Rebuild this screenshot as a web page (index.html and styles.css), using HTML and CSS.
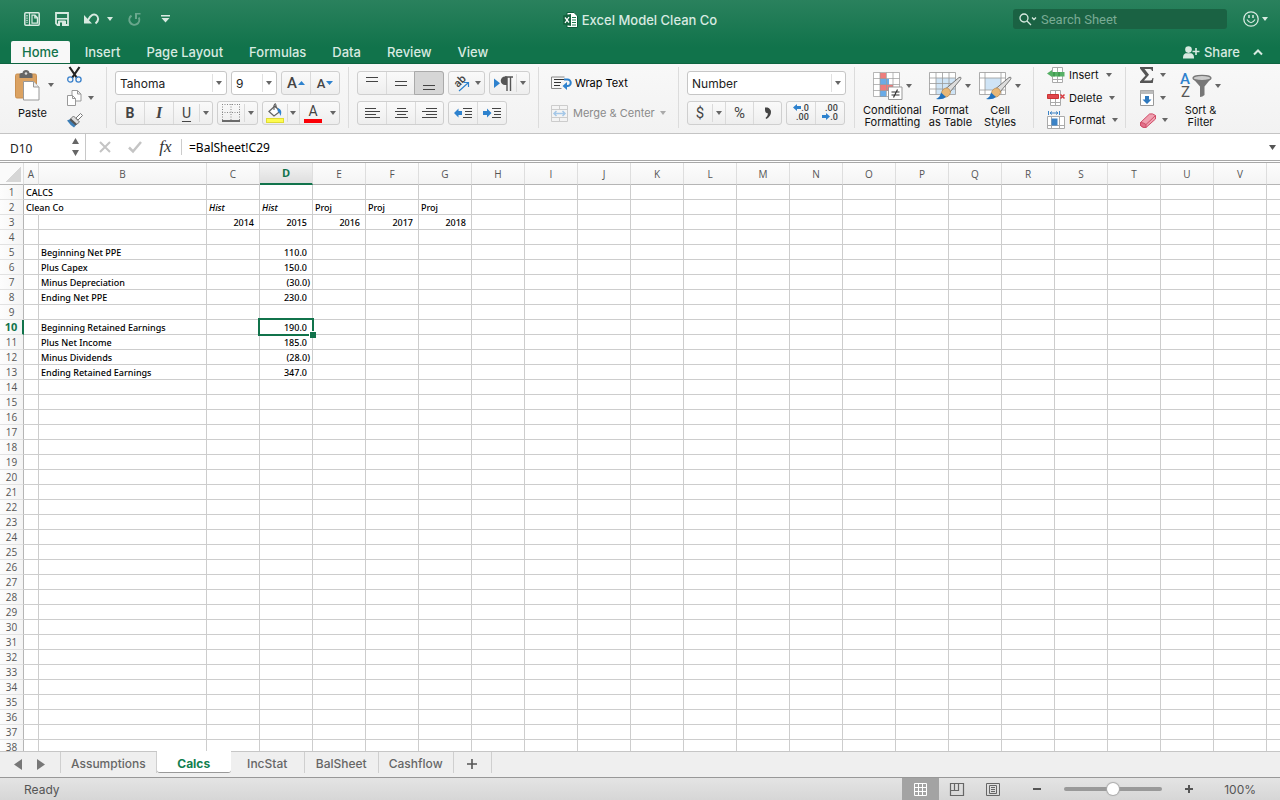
FILE: index.html
```html
<!DOCTYPE html>
<html lang="en">
<head>
    <meta charset="UTF-8">
    <meta name="viewport" content="width=device-width, initial-scale=1.0">
    <title>Excel Model Clean Co</title>
    <link rel="stylesheet" href="styles.css">
</head>
<body>

    <header class="top">
        <div class="titlebar">
            <div class="quick">
                <button aria-label="New from template"><svg width="16" height="14" viewBox="0 0 16 14"><rect x=".8" y=".8" width="14.4" height="12.4" rx="1" fill="none" stroke="currentColor" stroke-width="1.5"/><path d="M5.5 1v12" stroke="currentColor" stroke-width="1.2"/><path d="M3 3v8" stroke="currentColor" stroke-width="1.4" stroke-dasharray="1.4 1"/><path d="M8 3.2h3l2.4 2.4v5.6H8zM10.8 3.2v2.6h2.6" fill="none" stroke="currentColor" stroke-width="1.2"/></svg></button>
                <button aria-label="Save"><svg width="14" height="14" viewBox="0 0 14 14"><path d="M1 1h12v12H2.5L1 11.500z" fill="none" stroke="currentColor" stroke-width="1.8"/><path d="M1 6.800h12" stroke="currentColor" stroke-width="1.6"/><path d="M3.500 13V9h7v4z" stroke="currentColor" fill="currentColor"/><path d="M5 10.500h2V14H5z" fill="#1f7a54"/></svg></button>
                <button class="undo" aria-label="Undo"><svg width="16" height="12" viewBox="0 0 16 12"><path d="M0 2v8.500h8z" fill="currentColor"/><path d="M4 7C7 1 10 .8 12 2c3 2 3 5.500-.5 8.500" fill="none" stroke="currentColor" stroke-width="2"/></svg><i class="caret"></i></button>
                <button class="faded" aria-label="Redo"><svg width="13" height="13" viewBox="0 0 13 13"><path d="M3.500 2.600A5 5 0 1 0 10.800 4.500" fill="none" stroke="currentColor" stroke-width="2"/><path d="M7 0h5.500v1.500H9V6H7z" fill="currentColor"/></svg></button>
                <button class="more" aria-label="Customize toolbar"><svg width="9" height="8" viewBox="0 0 9 8"><path d="M0 0h9v1.500H0zM.5 3h8L4.500 7.500z" fill="currentColor"/></svg></button>
            </div>
            <h1 class="doc-title">
                <svg width="15" height="16" viewBox="0 0 15 16"><path d="M4 .5h7l3.500 3.500v11.500H4z" fill="#fff" stroke="#0d5c3b"/><path d="M0 3.500l8-1.500v12l-8-1.500z" fill="#14633f"/><path d="M2 5.500l4 5M6 5l-4 6" stroke="#fff" stroke-width="1.300"/><path d="M9 5.500h4M9 8h4M9 10.500h4M9 13h4" stroke="#1c7a50"/></svg>
                Excel Model Clean Co
            </h1>
            <div class="title-right">
                <label class="search">
                    <svg width="18" height="13" viewBox="0 0 18 13"><circle cx="5" cy="5" r="4" fill="none" stroke="currentColor" stroke-width="1.300"/><path d="M8 8l4 4M13 4.500l2 2 2-2" fill="none" stroke="currentColor" stroke-width="1.300"/></svg>
                    <input type="search" placeholder="Search Sheet" aria-label="Search Sheet">
                </label>
                <button class="smile" aria-label="Feedback"><svg width="16" height="16" viewBox="0 0 16 16"><circle cx="8" cy="8" r="7.200" fill="none" stroke="currentColor" stroke-width="1.300"/><path d="M4 8.500q4 6.500 8 0" fill="none" stroke="currentColor" stroke-width="1.200"/><path d="M6 4v3M10 4v3" stroke="currentColor" stroke-width="1.500"/></svg><i class="caret"></i></button>
            </div>
        </div>
        <nav class="tabs">
            <a class="tab active" href="#home">Home</a>
            <a class="tab" href="#insert">Insert</a>
            <a class="tab" href="#page-layout">Page Layout</a>
            <a class="tab" href="#formulas">Formulas</a>
            <a class="tab" href="#data">Data</a>
            <a class="tab" href="#review">Review</a>
            <a class="tab" href="#view">View</a>
            <button class="share"><svg width="17" height="13" viewBox="0 0 17 13"><circle cx="5.500" cy="3.600" r="3.300" fill="currentColor"/><path d="M0 12.500c0-4 1.500-5 3.500-5.200h4c2 .2 3.500 1.200 3.500 5.200z" fill="currentColor"/><path d="M13 2v7M9.500 5.500h7" stroke="currentColor" stroke-width="1.600"/></svg>Share</button>
            <button class="collapse" aria-label="Collapse ribbon"><svg width="10" height="7" viewBox="0 0 10 7"><path d="M1 5.500l4-4 4 4" fill="none" stroke="currentColor" stroke-width="2"/></svg></button>
        </nav>
    </header>

    <section class="ribbon">
        <div class="group paste-group">
            <button class="big paste">
                <span class="pic"><svg width="25" height="31" viewBox="0 0 25 31"><rect x=".5" y="4" width="21" height="24" rx="1.500" fill="#dba262" stroke="#c98f50"/><path d="M4.500 8V4.500c0-1 1-1.500 3-1.500 0-4 7-4 7 0 2 0 3 .5 3 1.500V8z" fill="#666"/><circle cx="11" cy="3.500" r="1.300" fill="#ddd"/><path d="M8.500 11.500h10l5.500 5.500v13H8.500z" fill="#fff" stroke="#999"/><path d="M18.500 11.500V17H24" fill="#eee" stroke="#999"/></svg><i class="caret"></i></span>
                <span class="paste-label">Paste</span>
            </button>
            <div class="stack">
                <button aria-label="Cut"><svg width="15" height="16" viewBox="0 0 15 16"><path d="M2.500 0l7.500 11M12.500 0L5 11" stroke="#222" stroke-width="2.200"/><circle cx="3.300" cy="12.500" r="2.600" fill="none" stroke="#3b82cc" stroke-width="1.300"/><circle cx="11.500" cy="12.500" r="2.600" fill="none" stroke="#3b82cc" stroke-width="1.300"/></svg></button>
                <button aria-label="Copy"><svg width="15" height="16" viewBox="0 0 15 16"><path d="M5 .5h5.500l3.500 3.500v7H5zM10.500.5V4H14" fill="#fff" stroke="#999"/><path d="M.5 5.500h5l3 3v7h-8zM5.500 5.500v3h3" fill="#fff" stroke="#999"/></svg><i class="caret"></i></button>
                <button aria-label="Format painter"><svg width="16" height="15" viewBox="0 0 16 15"><path d="M9 5l4.500-4.500 2 2L11 7z" fill="#fff" stroke="#777"/><path d="M6.500 3l6 6-3 2.500-6-5.500z" fill="#ddd" stroke="#777"/><path d="M3.500 6L9.500 11.500 7 14.500Q3 12 0 7.500z" fill="#3d7fb8"/><path d="M4 5.500l6 5.500-1.500 1.500-6-5.500z" fill="#555"/></svg></button>
            </div>
        </div>

        <div class="group rows">
            <div class="row">
                <span class="picker font"><select aria-label="Font"><option>Tahoma</option></select></span>
                <span class="picker size"><select aria-label="Font size"><option>9</option></select></span>
                <div class="btns">
                    <button class="w29" aria-label="Increase font size"><b class="grow">A</b><svg width="7" height="4" viewBox="0 0 7 4"><path d="M0 4h7L3.500 0z" fill="#2e82ce"/></svg></button>
                    <button class="w30 line" aria-label="Decrease font size"><b class="shrink">A</b><svg width="7" height="4" viewBox="0 0 7 4"><path d="M0 0h7L3.500 4z" fill="#2e82ce"/></svg></button>
                </div>
            </div>
            <div class="row">
                <div class="btns">
                    <button class="w29 letter bold">B</button>
                    <button class="w30 line letter italic">I</button>
                    <button class="w27 line letter underline">U</button>
                    <button class="w13 short" aria-label="Underline style"><i class="caret"></i></button>
                </div>
                <div class="btns">
                    <button class="w27" aria-label="Borders"><svg width="18" height="18" viewBox="0 0 18 18"><path d="M.5 0v16M9 0v16M17.500 0v16M0 .5h18M0 8.500h18" stroke="#888" stroke-dasharray="1 1.500"/><path d="M0 17h18" stroke="#222" stroke-width="1.300"/></svg></button>
                    <button class="w13 short" aria-label="Border style"><i class="caret"></i></button>
                </div>
                <div class="btns">
                    <button class="w25" aria-label="Fill color"><svg width="18" height="20" viewBox="0 0 18 20"><path d="M3 8.500L9 3l5 5.500-6 4.500z" fill="#fff" stroke="#666" stroke-width="1.300"/><path d="M8 7V2q1.500-3 2 0v3" fill="none" stroke="#555"/><path d="M12 5q5 2 2.500 8-1-4-3-5z" fill="#2e82ce"/><rect x=".5" y="15.500" width="17" height="4" fill="#fdfb4e" stroke="#dfdb35"/></svg></button>
                    <button class="w12 short" aria-label="Fill colors"><i class="caret"></i></button>
                    <button class="w28 line" aria-label="Font color"><span class="font-color">A</span></button>
                    <button class="w13" aria-label="Font colors"><i class="caret"></i></button>
                </div>
            </div>
        </div>

        <div class="group rows">
            <div class="row">
                <div class="btns">
                    <button class="w29" aria-label="Top align"><svg width="12" height="14" viewBox="0 0 12 14"><path d="M0 1.500h12M0 5.500h12" stroke="#444"/></svg></button>
                    <button class="w30 line" aria-label="Middle align"><svg width="12" height="14" viewBox="0 0 12 14"><path d="M0 5.500h12M0 9.500h12" stroke="#444"/></svg></button>
                    <button class="w30 pressed" aria-label="Bottom align"><svg width="12" height="14" viewBox="0 0 12 14"><path d="M0 9.500h12M0 13.500h12" stroke="#444"/></svg></button>
                </div>
                <div class="btns">
                    <button class="w35 orient" aria-label="Orientation"><svg width="18" height="17" viewBox="0 0 18 17"><text x="0" y="0" transform="translate(5 13) rotate(-45)" class="tiny-ab">ab</text><path d="M6 16L15 8M10.500 7.500H15.500V12" fill="none" stroke="#2e82ce" stroke-width="1.200"/></svg><i class="caret"></i></button>
                </div>
                <div class="btns">
                    <button class="w27" aria-label="Text direction"><svg width="19" height="15" viewBox="0 0 19 15"><path d="M0 2.500v9.500l6-4.700z" fill="#2e82ce"/><path d="M13 .5h-2a4 4 0 0 0 0 8.500h2z" fill="#555"/><path d="M13 1v14M16.500 1v14M11 1h8" stroke="#555" stroke-width="1.400"/></svg></button>
                    <button class="w13 short" aria-label="Text directions"><i class="caret"></i></button>
                </div>
            </div>
            <div class="row">
                <div class="btns">
                    <button class="w29" aria-label="Align left"><svg width="15" height="12" viewBox="0 0 15 12"><path d="M0 1.500h11M0 4.500h15M0 7.500h11M0 10.500h15" stroke="#444"/></svg></button>
                    <button class="w30 line" aria-label="Align center"><svg width="15" height="12" viewBox="0 0 15 12"><path d="M3 1.500h9M1 4.500h13M3 7.500h9M1 10.500h13" stroke="#444"/></svg></button>
                    <button class="w29 line" aria-label="Align right"><svg width="15" height="12" viewBox="0 0 15 12"><path d="M4 1.500h11M0 4.500h15M4 7.500h11M0 10.500h15" stroke="#444"/></svg></button>
                </div>
                <div class="btns">
                    <button class="w29" aria-label="Decrease indent"><svg width="18" height="12" viewBox="0 0 18 12"><path d="M9 1.500h9M11 4.500h7M11 7.500h7M9 10.500h9" stroke="#444"/><path d="M0 6l4.500-4.500v2.500H8v4H4.500v2.500z" fill="#2e82ce"/></svg></button>
                    <button class="w30 line" aria-label="Increase indent"><svg width="18" height="12" viewBox="0 0 18 12"><path d="M9 1.500h9M11 4.500h7M11 7.500h7M9 10.500h9" stroke="#444"/><path d="M8.500 6L4 1.500V4H0v4h4v2.500z" fill="#2e82ce"/></svg></button>
                </div>
            </div>
        </div>

        <div class="group rows wrap-group">
            <button class="plain"><svg width="20" height="14" viewBox="0 0 20 14"><path d="M.5 1h13M.5 1v11.500h10" stroke="#888" fill="none"/><path d="M3 3.500h10M3 6.500h7M3 9.500h6" stroke="#333"/><path d="M13 3.500h3.500a3 3 0 0 1 0 6.500H15" fill="none" stroke="#2e82ce" stroke-width="2"/><path d="M11.500 10l4.500-4v8z" fill="#2e82ce"/></svg>Wrap Text</button>
            <button class="plain" disabled><svg width="17" height="17" viewBox="0 0 17 17"><path d="M.5.5h16v16H.5zM.5 4.500h16M.5 12.500h16M8.500.5v4M8.500 12.500v4" fill="none" stroke="#ccc"/><path d="M3 8.500h11M5.500 6L3 8.500 5.500 11M11.500 6L14 8.500 11.500 11" fill="none" stroke="#a5c8e8" stroke-width="1.500"/></svg>Merge &amp; Center<i class="caret"></i></button>
        </div>

        <div class="group rows number-group">
            <div class="row">
                <span class="picker number"><select aria-label="Number format"><option>Number</option></select></span>
            </div>
            <div class="row">
                <div class="btns">
                    <button class="w25 sign" aria-label="Currency">$</button>
                    <button class="w13 short" aria-label="Currencies"><i class="caret"></i></button>
                    <button class="w29 line sign" aria-label="Percent">%</button>
                    <button class="w29 line" aria-label="Comma style"><svg width="8" height="12" viewBox="0 0 8 12"><path d="M1 .5h2.500Q7 2 7 5q0 4-4.500 7L1.500 11Q4 8.500 4 6.500 1 6 1 3z" fill="#444"/></svg></button>
                </div>
                <div class="btns">
                    <button class="w29" aria-label="Increase decimal"><span class="decimal"><svg width="8" height="7" viewBox="0 0 8 7"><path d="M0 3.500L4 0v2h4v3H4v2z" fill="#2e82ce"/></svg>.0<br>.00</span></button>
                    <button class="w30 line" aria-label="Decrease decimal"><span class="decimal">.00<br><svg width="8" height="7" viewBox="0 0 8 7"><path d="M8 3.500L4 0v2H0v3h4v2z" fill="#2e82ce"/></svg>.0</span></button>
                </div>
            </div>
        </div>

        <div class="group styles-group">
            <button class="big cond">
                <span class="pic"><svg width="30" height="28" viewBox="0 0 30 28"><path d="M.5.5h26v24H.5z" fill="#fff"/><path d="M7 1h6v6H7zM7 13h13v6H7z" fill="#ed7d7d"/><path d="M7 7h9v6H7zM7 19h6v6H7z" fill="#6aabe6"/><path d="M.5.5h26v24H.5zM.5 6.500h26M.5 12.500h26M.5 18.500h26M7 .5v24M13.500.5v24M20 .5v24" fill="none" stroke="#999" stroke-width=".7"/><path d="M15.500 15h13.500v12.500H15.500z" fill="#fff" stroke="#999"/><path d="M18.500 20h8M18.500 23h8M24.500 17.500l-4 8" stroke="#333" stroke-width="1.200"/></svg><i class="caret"></i></span>
                Conditional<br>Formatting
            </button>
            <button class="big table-style">
                <span class="pic"><svg width="33" height="28" viewBox="0 0 33 28"><path d="M.5.5h26v22H.5z" fill="#fff"/><path d="M7 6h19.500v16.500H7z" fill="#cfe4f6"/><path d="M.5.5h26v22H.5zM.5 6h26M.5 11.500h26M.5 17h26M7 .5v22M13.500.5v22M20 .5v22" fill="none" stroke="#999" stroke-width=".8"/><path d="M17 16.500L30 5.500q3-1 1.500 2L21 20z" fill="#ddd" stroke="#777"/><path d="M17 16q4 0 4.500 4.500-1.500 5-6 4.500l-3-3.500q0-4 4.500-5.500z" fill="#e8b878" stroke="#b98748" stroke-width=".7"/><path d="M12 20.500l5 4.500q-3 3-10 2 4-1.500 5-6.500z" fill="#2372bd"/></svg><i class="caret"></i></span>
                Format<br>as Table
            </button>
            <button class="big cell-style">
                <span class="pic"><svg width="33" height="28" viewBox="0 0 33 28"><path d="M.5.5h26v22H.5z" fill="#fff"/><path d="M6 6h16v12H6z" fill="#cfe4f6"/><path d="M.5.5h26v22H.5zM.5 6h26M.5 18h26M6 .5v22M22 .5v22" fill="none" stroke="#999" stroke-width=".8"/><path d="M17 16.500L30 5.500q3-1 1.500 2L21 20z" fill="#ddd" stroke="#777"/><path d="M17 16q4 0 4.500 4.500-1.500 5-6 4.500l-3-3.500q0-4 4.500-5.500z" fill="#e8b878" stroke="#b98748" stroke-width=".7"/><path d="M12 20.500l5 4.500q-3 3-10 2 4-1.500 5-6.500z" fill="#2372bd"/></svg><i class="caret"></i></span>
                Cell<br>Styles
            </button>
        </div>

        <div class="group stack cells-group">
            <button><svg width="18" height="16" viewBox="0 0 18 16"><path d="M5.500.5h10v15h-10zM5.500 12.500h10M10.500.5v15" fill="#fff" stroke="#aaa"/><path d="M0 6.500L5 3v2h12.500v4.500H5V10z" fill="#56b065"/><path d="M7 5v4.500M12 5v4.500" stroke="#2f8a3e" /></svg>Insert<i class="caret"></i></button>
            <button><svg width="18" height="16" viewBox="0 0 18 16"><path d="M3.500.5h10v15h-10zM3.500 12.500h10M8.500.5v15" fill="#fff" stroke="#aaa"/><path d="M.5 4.500h11v4H.5z" fill="#e0484e" stroke="#c33"/><path d="M13.500 4.500l4 4M17.500 4.500l-4 4" stroke="#d8393f" stroke-width="1.500"/></svg>Delete<i class="caret"></i></button>
            <button><svg width="18" height="18" viewBox="0 0 18 18"><path d="M.5 5.500h17v12H.5zM.5 14.500h17M4.500 5.500v12M12.500 5.500v12" fill="#fff" stroke="#aaa"/><path d="M4.500 7.500h6v7h-6z" fill="#3c83c6"/><path d="M1.500 0v4M12.500 0v4M3 2h8M5 .5L3 2l2 1.500M9 .5L11 2 9 3.500" fill="none" stroke="#3c83c6"/></svg>Format<i class="caret"></i></button>
        </div>

        <div class="group last">
            <div class="stack edit">
                <button aria-label="AutoSum"><svg width="14" height="16" viewBox="0 0 14 16"><path d="M0 0h13v4h-1q-.3-2-2-2H4.500L9 7.700 4 13.500h6.500q1.500 0 2-2.500h1l-.7 5H0v-1.500l5.500-6L0 1.500z" fill="#555"/></svg><i class="caret"></i></button>
                <button aria-label="Fill"><svg width="14" height="16" viewBox="0 0 14 16"><path d="M.5.5h13v15H.5z" fill="#fff" stroke="#999"/><path d="M.5.500h13V4H.5z" fill="#bbb"/><path d="M5 6h4v3.500h2.500L7 14 2.500 9.500H5z" fill="#2e78bd"/></svg><i class="caret"></i></button>
                <button aria-label="Clear"><svg width="16" height="15" viewBox="0 0 16 15"><path d="M.5 9.500L9.500 1q3-1 6 1.500V6L6 14.500q-3 .5-5.500-2z" fill="#f0a0b0" stroke="#cf4d68"/><path d="M.5 9.500q3 0 5.500 2v3q-3 .5-5.500-2zM6 11.500l9.500-9" fill="#e2708a" stroke="#cf4d68"/></svg><i class="caret"></i></button>
            </div>
            <button class="big sort">
                <span class="pic"><svg width="32" height="27" viewBox="0 0 32 27"><text x="0" y="12" class="sort-a">A</text><text x="1" y="25" class="sort-z">Z</text><path d="M13 6.500q9 5 18 0l-6.500 8V23q-2 2-4.500 2V14.500z" fill="#777"/><ellipse cx="22" cy="6" rx="9" ry="2.700" fill="#ccc" stroke="#777" stroke-width="1.300"/></svg><i class="caret"></i></span>
                Sort &amp;<br>Filter
            </button>
        </div>
    </section>

    <section class="formula-bar">
        <input class="name-box" type="text" value="D10" aria-label="Name box">
        <button class="stepper" aria-label="Names"><svg width="7" height="18" viewBox="0 0 7 18"><path d="M0 6h7L3.500 0zM0 12h7l-3.500 6z" fill="#666"/></svg></button>
        <button class="entry" aria-label="Cancel"><svg width="12" height="12" viewBox="0 0 12 12"><path d="M1 1l10 10M11 1L1 11" stroke="#c4c4c4" stroke-width="2"/></svg></button>
        <button class="entry" aria-label="Enter"><svg width="14" height="12" viewBox="0 0 14 12"><path d="M1 6.500l4 4L13 1" fill="none" stroke="#c4c4c4" stroke-width="2.500"/></svg></button>
        <button class="entry fx" aria-label="Insert function">fx</button>
        <input class="formula" type="text" value="=BalSheet!C29" aria-label="Formula">
        <button class="expand" aria-label="Expand formula bar"><svg width="7" height="5" viewBox="0 0 7 5"><path d="M0 0h7L3.500 5z" fill="#555"/></svg></button>
    </section>

    <main class="grid">
        <table class="sheet">
            <colgroup id="cols"></colgroup>
            <thead><tr id="heads"></tr></thead>
            <tbody id="body"></tbody>
        </table>
    </main>

    <nav class="sheet-tabs">
        <div class="arrows">
            <button aria-label="Previous sheet"><svg width="8" height="11" viewBox="0 0 8 11"><path d="M8 0v11L0 5.500z" fill="#777"/></svg></button>
            <button aria-label="Next sheet"><svg width="8" height="11" viewBox="0 0 8 11"><path d="M0 0v11l8-5.500z" fill="#777"/></svg></button>
        </div>
        <a class="sheet-tab" href="#assumptions">Assumptions</a>
        <a class="sheet-tab active" href="#calcs">Calcs</a>
        <a class="sheet-tab" href="#incstat">IncStat</a>
        <a class="sheet-tab" href="#balsheet">BalSheet</a>
        <a class="sheet-tab" href="#cashflow">Cashflow</a>
        <button class="add" aria-label="Add sheet"><svg width="10" height="10" viewBox="0 0 10 10"><path d="M5 0v10M0 5h10" stroke="#555" stroke-width="1.600"/></svg></button>
    </nav>

    <footer class="status">
        <span class="ready">Ready</span>
        <button class="view active" aria-label="Normal view"><svg width="13" height="13" viewBox="0 0 13 13"><path d="M.5.5h12v12H.5zM4.500.5v12M8.500.5v12M.5 4.500h12M.5 8.500h12" fill="none" stroke="#fff"/></svg></button>
        <button class="view" aria-label="Page layout view"><svg width="14" height="13" viewBox="0 0 14 13"><path d="M.5.5h13v12H.5zM.5 7.500h8v-7M4.500.5v7" fill="none" stroke="#666" stroke-width="1.200"/></svg></button>
        <button class="view" aria-label="Page break view"><svg width="14" height="13" viewBox="0 0 14 13"><path d="M.5.5h13v12H.5zM3.500 2.500h7v8h-7zM5 4.500h4M5 6.500h4M5 8.500h4" fill="none" stroke="#666"/></svg></button>
        <button class="zoom-btn out" aria-label="Zoom out"><svg width="8" height="8" viewBox="0 0 8 8"><path d="M0 4h8" stroke="#555" stroke-width="2"/></svg></button>
        <input class="zoom" type="range" min="0" max="200" value="100" aria-label="Zoom">
        <button class="zoom-btn" aria-label="Zoom in"><svg width="8" height="8" viewBox="0 0 8 8"><path d="M0 4h8M4 0v8" stroke="#555" stroke-width="2"/></svg></button>
        <span class="percent">100%</span>
    </footer>

    <script>
        const letters = "ABCDEFGHIJKLMNOPQRSTUV".split("");
        const rowCount = 38;
        const active = { col: "D", row: 10 };

        const cells = {
            A1: "CALCS",
            A2: "Clean Co", C2: "Hist", D2: "Hist", E2: "Proj", F2: "Proj", G2: "Proj",
            C3: 2014, D3: 2015, E3: 2016, F3: 2017, G3: 2018,
            B5: "Beginning Net PPE", D5: "110.0",
            B6: "Plus Capex", D6: "150.0",
            B7: "Minus Depreciation", D7: "(30.0)",
            B8: "Ending Net PPE", D8: "230.0",
            B10: "Beginning Retained Earnings", D10: "190.0",
            B11: "Plus Net Income", D11: "185.0",
            B12: "Minus Dividends", D12: "(28.0)",
            B13: "Ending Retained Earnings", D13: "347.0"
        };

        function cellClass(col, row, value) {
            let names = [];
            if (value === "Hist") names.push("hist");
            if (typeof value === "number") names.push("year");
            else if (/^\(/.test(value)) names.push("negative");
            else if (/^\d/.test(value)) names.push("amount");
            if (col === "A" && value) names.push("spill");
            if (col === active.col && row === active.row) names.push("selected");
            return names.join(" ");
        }

        let cols = '<col class="col-row"><col class="col-a"><col class="col-b">';
        cols += '<col class="col-n">'.repeat(letters.length - 2) + "<col>";
        document.getElementById("cols").innerHTML = cols;

        let heads = '<th class="corner"></th>';
        letters.forEach(col => {
            heads += `<th scope="col" class="${col === active.col ? "current" : ""}">${col}</th>`;
        });
        document.getElementById("heads").innerHTML = heads + "<th></th>";

        let body = "";
        for (let row = 1; row <= rowCount; row++) {
            body += `<tr><th scope="row" class="${row === active.row ? "current" : ""}">${row}</th>`;
            letters.forEach(col => {
                let value = cells[col + row] || "";
                body += `<td class="${cellClass(col, row, value)}">${value}</td>`;
            });
            body += "<td></td></tr>";
        }
        document.getElementById("body").innerHTML = body;
    </script>
</body>
</html>
```
FILE: styles.css
```css
* {
    box-sizing: border-box;
}

body {
    margin: 0;
    height: 100vh;
    display: flex;
    flex-direction: column;
    overflow: hidden;
    font-family: Roboto, "Liberation Sans", sans-serif;
    font-size: 12px;
    color: #222;
    background: white;
}

button {
    display: flex;
    align-items: center;
    justify-content: center;
    padding: 0;
    border: none;
    background: none;
    font: inherit;
    color: inherit;
}

svg {
    flex: none;
    display: block;
    overflow: visible;
}

a {
    color: inherit;
    text-decoration: none;
}

.caret {
    flex: none;
    border: 3px solid transparent;
    border-top: 4px solid #666;
    border-bottom: none;
}

/* title bar and tabs */

.top {
    background: linear-gradient(#2a815d, #11734b 75%);
    border-bottom: 1px solid #0e6541;
    color: #d8eae1;
}

.top .caret {
    border-top-color: #d8eae1;
}

.titlebar {
    display: grid;
    grid-template-columns: 1fr auto 1fr;
    align-items: center;
    height: 38px;
    padding: 0 12px;
}

.quick,
.title-right {
    display: flex;
    align-items: center;
}

.quick {
    gap: 15px;
    padding-left: 12px;
}

.undo {
    gap: 7px;
}

.faded {
    opacity: 0.4;
}

.more {
    padding-left: 5px;
}

.doc-title {
    display: flex;
    align-items: center;
    gap: 4px;
    margin: 0;
    padding-top: 2px;
    font-size: 13px;
    font-weight: 500;
    font-family: Inter, sans-serif;
}

.title-right {
    justify-content: flex-end;
    gap: 16px;
}

.search {
    display: flex;
    align-items: center;
    gap: 4px;
    width: 214px;
    height: 20px;
    padding-left: 6px;
    border-radius: 3px;
    background: #1a6243;
}

.search input {
    width: 100%;
    min-width: 0;
    padding: 0;
    border: none;
    outline: none;
    background: none;
    font: 13px Roboto, sans-serif;
    color: white;
}

.search input::placeholder {
    color: #79ab94;
}

.smile {
    gap: 3px;
}

.tabs {
    display: flex;
    align-items: center;
    gap: 4px;
    height: 25px;
    padding: 3px 17px 0 11px;
    font: 500 13px Inter, sans-serif;
}

.tab {
    padding: 0 11px;
    line-height: 22px;
}

.tab.active {
    border-radius: 2px 2px 0 0;
    background: #f8f8f8;
    color: #11734b;
}

.share {
    gap: 4px;
    margin-left: auto;
}

.collapse {
    margin-left: 9px;
}

/* ribbon */

.ribbon {
    display: flex;
    padding: 3px 0 5px;
    border-bottom: 1px solid #c4c4c4;
    background: linear-gradient(#f8f8f8, #f2f2f2);
    color: #111;
    font-size: 11px;
}

.group {
    flex: none;
    display: flex;
    height: 61px;
    padding: 0 8px;
    border-right: 1px solid #dcdcdc;
}

.group.last {
    border: none;
}

.rows {
    flex-direction: column;
    gap: 6px;
    padding-top: 4px;
}

.row {
    display: flex;
    gap: 4px;
}

.big {
    flex-direction: column;
    justify-content: flex-start;
    font: 11px/12px Inter, sans-serif;
}

.pic {
    display: flex;
    align-items: center;
    justify-content: center;
    height: 40px;
    gap: 3px;
}

.stack {
    display: flex;
    flex-direction: column;
    justify-content: space-between;
}

.stack button {
    justify-content: flex-start;
    height: 16px;
    gap: 6px;
}

.paste-group {
    width: 107px;
    padding-left: 15px;
    gap: 13px;
}

.paste .pic {
    gap: 8px;
    padding-bottom: 4px;
}

.paste {
    align-items: flex-start;
}

.paste-label {
    padding-left: 3px;
}

.btns {
    display: flex;
    height: 24px;
    border: 1px solid #cfcfcf;
    border-radius: 3px;
    background: linear-gradient(#fafafa, #eeeeee);
}

.btns button {
    gap: 1px;
}

.btns .line {
    border-left: 1px solid #dadada;
}

.btns .short {
    background: linear-gradient(#dadada, #dadada) left center / 1px 18px no-repeat;
}

.btns .pressed {
    margin: -1px;
    border: 1px solid #aaa;
    border-radius: 0 3px 3px 0;
    background: #d6d6d6;
}

.w12 { width: 12px; }
.w13 { width: 13px; }
.w25 { width: 24px; }
.w27 { width: 26px; }
.w28 { width: 27px; }
.w29 { width: 28px; }
.w30 { width: 29px; }
.w35 { width: 35px; }

.btns .pressed {
    width: 30px;
}

.btns .orient {
    gap: 4px;
}

.picker {
    position: relative;
    height: 24px;
    border: 1px solid #c6c6c6;
    border-radius: 3px;
    background: linear-gradient(#e0e0e0, #e0e0e0) right 13px center / 1px 18px no-repeat white;
}

.picker::after {
    content: "";
    position: absolute;
    right: 4px;
    top: 9px;
    border: 3px solid transparent;
    border-top: 4px solid #666;
    border-bottom: none;
    pointer-events: none;
}

.picker select {
    width: 100%;
    height: 22px;
    padding: 0 0 0 4px;
    border: none;
    appearance: none;
    background: none;
    font: 12px Inter, sans-serif;
    color: #222;
}

.font { width: 112px; }
.size { width: 46px; }
.number { width: 159px; }

.grow,
.shrink {
    font-weight: 500;
    color: #444;
}

.grow { font-size: 15px; }
.shrink { font-size: 13px; }

.letter {
    font-size: 14px;
    color: #444;
}

.bold {
    font-weight: bold;
}

.italic {
    font-family: "Liberation Serif", serif;
    font-size: 16px;
    font-style: italic;
    font-weight: bold;
}

.underline {
    text-decoration: underline;
    text-underline-offset: 3px;
}

.font-color {
    width: 18px;
    border-bottom: 4px solid #fb0007;
    font-size: 14px;
    line-height: 15px;
    color: #444;
}

.tiny-ab {
    font: 500 11px Roboto, sans-serif;
    fill: #444;
}

.sort-a {
    font: 500 15px Roboto, sans-serif;
    fill: #2e82ce;
}

.sort-z {
    font: 15px Roboto, sans-serif;
    fill: #555;
}

.wrap-group {
    width: 140px;
    padding-left: 12px;
}

.plain {
    justify-content: flex-start;
    height: 24px;
    gap: 4px;
    font: 11px Inter, sans-serif;
    color: black;
}

.plain:disabled {
    gap: 5px;
    color: #8a8a8a;
}

.plain:disabled .caret {
    border-top-color: #aaa;
}

.number-group {
    width: 176px;
}

.sign {
    font-size: 15px;
    color: #444;
}

.decimal {
    font: 500 9px/9px Roboto, sans-serif;
    text-align: right;
    color: #444;
}

.decimal svg {
    display: inline-block;
}

.styles-group {
    width: 179px;
    gap: 7px;
}

.styles-group .big {
    flex: none;
}

.cells-group {
    width: 92px;
    padding-left: 13px;
}

.cells-group button {
    gap: 4px;
    font: 11px Inter, sans-serif;
}

.cells-group .caret {
    margin-left: 3px;
}

.last {
    padding-left: 14px;
    gap: 12px;
}

/* formula bar */

.formula-bar {
    display: flex;
    align-items: center;
    height: 29px;
    padding-right: 4px;
    border-bottom: 3px double #a8a8a8;
}

.formula-bar input {
    height: 26px;
    padding: 0;
    border: none;
    outline: none;
    background: none;
    font: 12px "Noto Sans", sans-serif;
    color: black;
}

.formula-bar .name-box {
    width: 72px;
    padding: 3px 0 0 10px;
    color: #222;
}

.stepper {
    width: 14px;
    height: 26px;
    padding-right: 6px;
    border-right: 1px solid #c8c8c8;
}

.entry {
    width: 30px;
    margin-left: 4px;
    margin-right: -4px;
}

.fx {
    width: 32px;
    height: 16px;
    border-right: 1px solid #ccc;
    font: italic 17px/16px "Liberation Serif", serif;
    color: #333;
}

.formula-bar .formula {
    flex: 1;
    margin-left: 11px;
}

/* grid */

.grid {
    flex: 1;
    min-height: 0;
    overflow: hidden;
}

.sheet {
    width: 100%;
    table-layout: fixed;
    border-spacing: 0;
    font: 9px/14px "Noto Sans", "Open Sans", sans-serif;
    color: black;
}

.col-row { width: 24px; }
.col-a { width: 15px; }
.col-b { width: 168px; }
.col-n { width: 53px; }

.sheet td {
    height: 15px;
    padding: 2px 2px 0;
    border-right: 1px solid #cdcdcd;
    border-bottom: 1px solid #cdcdcd;
    font-weight: 500;
    line-height: 12px;
    white-space: nowrap;
}

.sheet th {
    padding: 0;
    font-family: "Open Sans", sans-serif;
    font-size: 10px;
    font-weight: 500;
    color: #555;
}

.sheet thead th {
    height: 22px;
    border-right: 1px solid #dedede;
    border-bottom: 1px solid #b5b5b5;
    background: linear-gradient(#fdfdfd, #f4f4f4);
}

.sheet tbody th {
    height: 15px;
    border-right: 1px solid #b5b5b5;
    border-bottom: 1px solid #e2e2e2;
    background: linear-gradient(to right, #fdfdfd, #f4f4f4);
}

.sheet tr :last-child {
    border-right: none;
}

.sheet thead .corner {
    background: linear-gradient(135deg, transparent 50%, #d6d6d6 50%) right 2px bottom 2px / 15px 15px no-repeat #fafafa;
}

.sheet thead .current {
    border-bottom: 2px solid #11734b;
    background: linear-gradient(#f4f4f4, #dedede);
    font-size: 11px;
    font-weight: bold;
    color: #11734b;
}

.sheet tbody .current {
    border-right: 2px solid #11734b;
    font-size: 11px;
    font-weight: bold;
    color: #11734b;
}

.sheet .spill {
    border-right-color: transparent;
}

.sheet .hist {
    font-style: italic;
}

.sheet .year,
.sheet .amount,
.sheet .negative {
    text-align: right;
}

.sheet .year,
.sheet .amount {
    padding-right: 5px;
}

.selected {
    position: relative;
}

.selected::before {
    content: "";
    position: absolute;
    inset: -2px;
    border: 2px solid #11734b;
}

.selected::after {
    content: "";
    position: absolute;
    right: -4px;
    bottom: -4px;
    width: 6px;
    height: 6px;
    border-top: 1px solid white;
    border-left: 1px solid white;
    background: #11734b;
}

/* sheet tabs */

.sheet-tabs {
    display: flex;
    height: 26px;
    padding-bottom: 4px;
    border-top: 1px solid #c6c6c6;
    background: #efefef;
    font: 500 12px/23px Inter, sans-serif;
    color: #666;
}

.arrows {
    display: flex;
    width: 61px;
    padding: 4px 0 0 14px;
    gap: 15px;
    border-right: 1px solid #cfcfcf;
}

.sheet-tab {
    min-width: 74px;
    padding: 0 10px;
    border-right: 1px solid #cfcfcf;
    text-align: center;
}

.sheet-tab.active {
    margin-top: -1px;
    border-right: none;
    border-bottom: 1px solid #999;
    border-radius: 0 0 3px 3px;
    background: white;
    font-weight: bold;
    line-height: 25px;
    color: #11804f;
}

.add {
    width: 38px;
    padding-top: 3px;
    border-right: 1px solid #cfcfcf;
}

/* status bar */

.status {
    display: flex;
    align-items: center;
    height: 23px;
    padding: 0 24px;
    border-top: 1px solid #989898;
    background: linear-gradient(#e4e4e4, #d6d6d6);
    font: 12px Inter, sans-serif;
    color: #555;
}

.ready {
    margin-right: auto;
}

.view {
    width: 36px;
    height: 22px;
}

.view.active {
    width: 37px;
    background: #a3a3a3;
}

.out {
    margin-left: 22px;
}

.zoom {
    width: 98px;
    height: 14px;
    margin: 0 23px;
    appearance: none;
    background: none;
}

.zoom::-webkit-slider-runnable-track {
    height: 4px;
    border-radius: 2px;
    background: #999;
}

.zoom::-webkit-slider-thumb {
    appearance: none;
    width: 12px;
    height: 12px;
    margin-top: -4px;
    border-radius: 50%;
    background: white;
    box-shadow: 0 0 1px 1px #aaa;
}

.percent {
    width: 63px;
    text-align: right;
}
```
